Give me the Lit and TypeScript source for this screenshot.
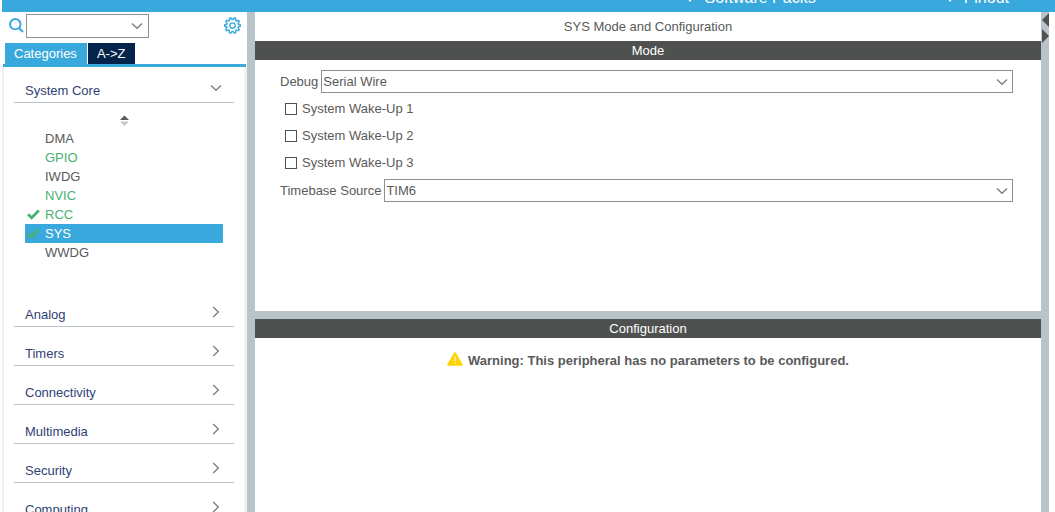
import { LitElement, html, css } from "lit";
import { customElement, state } from "lit/decorators.js";
import { classMap } from "lit/directives/class-map.js";

interface Peripheral {
  name: string;
  tone?: "green";
  checked?: boolean;
}

const PERIPHERALS: Peripheral[] = [
  { name: "DMA" },
  { name: "GPIO", tone: "green" },
  { name: "IWDG" },
  { name: "NVIC", tone: "green" },
  { name: "RCC", tone: "green", checked: true },
  { name: "SYS", checked: true },
  { name: "WWDG" },
];

const GROUPS = ["Analog", "Timers", "Connectivity", "Multimedia", "Security", "Computing"];

const chevronDown = html`<svg class="chevron" width="12" height="8" viewBox="0 0 12 8" aria-hidden="true">
  <path d="M1 1.5 L6 6.3 L11 1.5" fill="none" stroke="currentColor" stroke-width="1.4" />
</svg>`;

const chevronRight = html`<svg width="8" height="12" viewBox="0 0 8 12" aria-hidden="true">
  <path d="M1.2 1 L6.3 6 L1.2 11" fill="none" stroke="currentColor" stroke-width="1.4" />
</svg>`;

/* Outline of the settings cog: ten squared teeth around a ring. */
const gearOutline = (() => {
  const points: string[] = [];
  for (let i = 0; i < 120; i++) {
    const a = (i / 120) * Math.PI * 2;
    const wave = Math.max(-1, Math.min(1, Math.cos(a * 10) * 1.6));
    const r = 6.5 + wave * 0.9;
    points.push(`${(8 + r * Math.cos(a)).toFixed(2)} ${(8 + r * Math.sin(a)).toFixed(2)}`);
  }
  return `M${points.join("L")}Z`;
})();

@customElement("menu-bar")
class MenuBar extends LitElement {
  static styles = css`
    :host {
      display: flex;
      justify-content: flex-end;
      align-items: flex-end;
      gap: 129px;
      height: 12px;
      margin-left: 2px;
      padding: 0 46px 5px 0;
      box-sizing: border-box;
      overflow: hidden;
      background: #39a8dc;
    }
    .menu {
      display: flex;
      align-items: center;
      gap: 9px;
      flex: none;
      padding: 0;
      border: 0;
      background: none;
      color: #fff;
      font: 16px/18px "Liberation Sans", Arial, sans-serif;
    }
  `;

  render() {
    return ["Software Packs", "Pinout"].map(
      (name) => html`<button class="menu">
        <svg width="10" height="8" viewBox="0 0 10 8" aria-hidden="true">
          <path d="M1 1 L5 6 L9 1" fill="none" stroke="#fff" stroke-width="2.4" />
        </svg>
        ${name}
      </button>`
    );
  }
}

@customElement("side-panel")
class SidePanel extends LitElement {
  @state() private selected = "SYS";

  static styles = css`
    :host {
      display: flex;
      flex-direction: column;
      flex: 0 0 245px;
      overflow: hidden;
      background: #fff;
    }
    button {
      padding: 0;
      border: 0;
      background: none;
      font: inherit;
      color: inherit;
      text-align: left;
    }
    .search {
      display: flex;
      align-items: center;
      flex: none;
      height: 31px;
      padding: 0 6px 0 7px;
      gap: 2px;
      box-sizing: border-box;
    }
    .combo {
      display: flex;
      align-items: center;
      width: 123px;
      height: 24px;
      margin: 0 auto 3px 0;
      padding-right: 5px;
      box-sizing: border-box;
      border: 1px solid #8b9196;
      color: #808080;
    }
    .combo input {
      flex: 1;
      min-width: 0;
      padding: 0 2px;
      border: 0;
      outline: 0;
      background: none;
      font: inherit;
    }
    .combo button,
    .gear {
      display: flex;
    }
    .magnifier,
    .gear {
      margin-bottom: 4px;
    }
    .tabs {
      display: flex;
      flex: none;
      gap: 1px;
      margin: 0 1px;
      padding-left: 2px;
      border-bottom: 3px solid #39a8dc;
    }
    .tab {
      height: 21px;
      padding: 0 10px 0 9px;
      color: #fff;
      background: #03234b;
    }
    .tab.active {
      background: #39a8dc;
    }
    .list {
      flex: 1;
      min-height: 0;
      overflow: hidden;
      padding: 0 10px;
      border: solid #f0f0f0;
      border-width: 0 3px 0 2px;
    }
    .group {
      display: flex;
      align-items: flex-end;
      justify-content: space-between;
      width: 100%;
      height: 39px;
      padding: 0 14px 2px 11px;
      box-sizing: border-box;
      border-bottom: 1px solid #b8c4ca;
      color: #2f3f74;
      line-height: 18px;
    }
    .group svg {
      margin-bottom: 6px;
      color: #808080;
    }
    .group.open {
      height: 36px;
      padding-right: 12px;
    }
    .group.open svg {
      margin-bottom: 8px;
    }
    .sort {
      display: flex;
      justify-content: center;
      align-items: center;
      width: 100%;
      height: 26px;
      padding-top: 8px;
      box-sizing: border-box;
    }
    .items {
      margin: 0 11px 26px;
      padding: 0;
      list-style: none;
    }
    .item {
      display: grid;
      grid-template-columns: 18px 1fr;
      align-items: center;
      width: 100%;
      height: 19px;
      padding-left: 2px;
      color: #5a5a5a;
    }
    .item.green {
      color: #49b170;
    }
    .item.selected {
      background: #39a8dc;
      color: #fff;
    }
    .name {
      grid-column: 2;
      grid-row: 1;
    }
  `;

  render() {
    return html`
      <div class="search">
        <svg class="magnifier" width="15" height="15" viewBox="0 0 15 15" aria-hidden="true">
          <circle cx="6.3" cy="6.2" r="5.2" fill="none" stroke="#39a8dc" stroke-width="1.9" />
          <path d="M10 10 L14 14" stroke="#39a8dc" stroke-width="2.2" />
        </svg>
        <div class="combo">
          <input type="text" aria-label="Search" />
          <button aria-label="Search history">${chevronDown}</button>
        </div>
        <button class="gear" aria-label="Settings">
          <svg width="17" height="17" viewBox="0 0 16 16" aria-hidden="true">
            <path d=${gearOutline} fill="none" stroke="#39a8dc" stroke-width="1.4" />
            <circle cx="8" cy="8" r="2.5" fill="none" stroke="#39a8dc" stroke-width="1.3" />
          </svg>
        </button>
      </div>
      <div class="tabs">
        <button class="tab active">Categories</button>
        <button class="tab">A-&gt;Z</button>
      </div>
      <div class="list">
        <button class="group open">System Core ${chevronDown}</button>
        <button class="sort" aria-label="Sort">
          <svg width="9" height="11" viewBox="0 0 9 11" aria-hidden="true">
            <path d="M4.5 0.5 L9 5 H0 Z" fill="#5a5a5a" />
            <path d="M0 6.5 H9 L4.5 11 Z" fill="#c8c8c8" />
          </svg>
        </button>
        <ul class="items">
          ${PERIPHERALS.map(
            (p) => html`<li>
              <button
                class=${classMap({ item: true, green: p.tone === "green", selected: p.name === this.selected })}
                @click=${() => (this.selected = p.name)}
              >
                ${p.checked
                  ? html`<svg width="13" height="11" viewBox="0 0 13 11" aria-hidden="true">
                      <path d="M1 5.2 L4.7 8.8 L11.8 1.6" fill="none" stroke="#49b170" stroke-width="2.8" />
                    </svg>`
                  : null}
                <span class="name">${p.name}</span>
              </button>
            </li>`
          )}
        </ul>
        ${GROUPS.map((g) => html`<button class="group">${g} ${chevronRight}</button>`)}
      </div>
    `;
  }
}

@customElement("mode-pane")
class ModePane extends LitElement {
  static styles = css`
    :host {
      display: block;
      flex: 299 1 0;
      min-height: 0;
      overflow: hidden;
      background: #fff;
      color: #5a5a5a;
    }
    .title {
      margin: 0;
      font: inherit;
      line-height: 29px;
      text-align: center;
    }
    .bar {
      margin: 0;
      background: #4f5150;
      color: #fff;
      font: inherit;
      line-height: 19px;
      text-align: center;
    }
    .form {
      display: flex;
      flex-direction: column;
      padding: 10px 28px 10px 25px;
    }
    .field {
      display: flex;
      align-items: center;
      gap: 3px;
    }
    .box {
      display: grid;
      flex: 1;
      align-items: center;
      color: #808080;
    }
    .box > * {
      grid-area: 1 / 1;
    }
    .box .chevron {
      justify-self: end;
      margin-right: 5px;
      pointer-events: none;
    }
    select {
      appearance: none;
      width: 100%;
      height: 23px;
      margin: 0;
      padding: 0 20px 0 1px;
      border: 1px solid #8b9196;
      border-radius: 0;
      background: #fff;
      color: #5a5a5a;
      font: inherit;
    }
    .checks {
      margin: 2px 0 3px;
      padding: 0 5px;
    }
    .check {
      display: flex;
      align-items: center;
      gap: 5px;
      height: 27px;
    }
    .check input {
      appearance: none;
      width: 12px;
      height: 12px;
      margin: 0;
      border: 1px solid #505050;
      background: #fff;
    }
    .check input:checked {
      background: #39a8dc;
    }
  `;

  private combo(id: string, label: string, value: string) {
    return html`<div class="field">
      <label for=${id}>${label}</label>
      <div class="box">
        <select id=${id}>
          <option>${value}</option>
        </select>
        ${chevronDown}
      </div>
    </div>`;
  }

  render() {
    return html`
      <h1 class="title">SYS Mode and Configuration</h1>
      <h2 class="bar">Mode</h2>
      <form class="form">
        ${this.combo("debug", "Debug", "Serial Wire")}
        <div class="checks">
          ${[1, 2, 3].map((n) => html`<label class="check"><input type="checkbox" />System Wake-Up ${n}</label>`)}
        </div>
        ${this.combo("timebase", "Timebase Source", "TIM6")}
      </form>
    `;
  }
}

@customElement("config-pane")
class ConfigPane extends LitElement {
  static styles = css`
    :host {
      display: block;
      flex: 193 1 0;
      min-height: 0;
      overflow: hidden;
      background: #fff;
      color: #5a5a5a;
    }
    .bar {
      margin: 0;
      background: #4f5150;
      color: #fff;
      font: inherit;
      line-height: 19px;
      text-align: center;
    }
    .warning {
      display: flex;
      justify-content: center;
      align-items: center;
      gap: 5px;
      margin: 0;
      padding-top: 13px;
      font-weight: bold;
      line-height: 20px;
    }
    .warning svg {
      margin-bottom: 4px;
    }
  `;

  render() {
    return html`
      <h2 class="bar">Configuration</h2>
      <p class="warning">
        <svg width="16" height="14" viewBox="0 0 16 14" aria-hidden="true">
          <path d="M8 1.2 L14.8 12.8 H1.2 Z" fill="#ffd200" stroke="#ffd200" stroke-width="2" stroke-linejoin="round" />
          <path d="M8 4.8 V9" stroke="#fff" stroke-width="1.3" />
          <circle cx="8" cy="11" r="0.8" fill="#fff" />
        </svg>
        Warning: This peripheral has no parameters to be configured.
      </p>
    `;
  }
}

@customElement("app-root")
class AppRoot extends LitElement {
  static styles = css`
    :host {
      display: flex;
      flex-direction: column;
      height: 100vh;
      overflow: hidden;
      background: #fff;
      font: 13px/19px "Liberation Sans", Arial, sans-serif;
    }
    .body {
      display: flex;
      flex: 1;
      min-height: 0;
      padding: 0 6px 0 2px;
    }
    .split {
      flex: none;
      width: 8px;
      background: #b8c4ca;
    }
    .work {
      display: flex;
      flex-direction: column;
      flex: 1;
      min-width: 0;
      gap: 8px;
      background: #b8c4ca;
    }
    .arrows {
      display: block;
    }
  `;

  render() {
    return html`
      <menu-bar></menu-bar>
      <div class="body">
        <side-panel></side-panel>
        <div class="split"></div>
        <main class="work">
          <mode-pane></mode-pane>
          <config-pane></config-pane>
        </main>
        <div class="split">
          <svg class="arrows" width="8" height="32" viewBox="0 0 8 32" aria-hidden="true">
            <path d="M8 1 V15 L1 8 Z" fill="#505352" />
            <path d="M1 17 V31 L8 24 Z" fill="#505352" />
          </svg>
        </div>
      </div>
    `;
  }
}
